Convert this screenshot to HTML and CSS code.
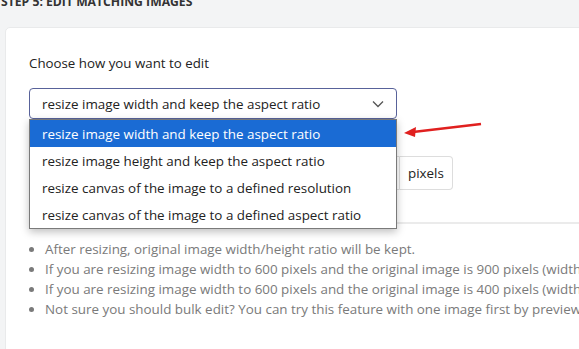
FILE: index.html
```html
<!DOCTYPE html>
<html lang="en">
<head>
    <meta charset="UTF-8">
    <title>Edit matching images</title>
    <link rel="stylesheet" href="styles.css">
</head>
<body>
    <!-- Step title -->
    <h4 class="step-title">STEP 5: EDIT MATCHING IMAGES</h4>

    <!-- Card -->
    <div class="card">
        <label class="field-label">Choose how you want to edit</label>

        <!-- Select with open dropdown -->
        <div class="select-wrap">
            <div class="select-box">
                <span>resize image width and keep the aspect ratio</span>
                <svg class="chevron" width="12" height="8" viewBox="0 0 12 8">
                    <path d="M1 1.5 L6 6.5 L11 1.5" fill="none" stroke="#555" stroke-width="1.3"/>
                </svg>
            </div>
            <ul class="select-list">
                <li class="active">resize image width and keep the aspect ratio</li>
                <li>resize image height and keep the aspect ratio</li>
                <li>resize canvas of the image to a defined resolution</li>
                <li>resize canvas of the image to a defined aspect ratio</li>
            </ul>
            <svg class="pointer" width="80" height="20" viewBox="0 0 80 20">
                <path d="M78 2 L10 10" stroke="#e0201f" stroke-width="2.4" fill="none"/>
                <path d="M1 11 L13 5 L12 15 Z" fill="#e0201f"/>
            </svg>
        </div>

        <!-- Width input -->
        <div class="input-group">
            <input type="text" class="input-field" value="600">
            <span class="addon">pixels</span>
        </div>

        <hr class="divider">

        <ul class="notes">
            <li>After resizing, original image width/height ratio will be kept.</li>
            <li>If you are resizing image width to 600 pixels and the original image is 900 pixels (width) x 600 pixels (height), the result is 600 x 400.</li>
            <li>If you are resizing image width to 600 pixels and the original image is 400 pixels (width) x 300 pixels (height), the result is 600 x 450.</li>
            <li>Not sure you should bulk edit? You can try this feature with one image first by previewing it.</li>
        </ul>
    </div>
</body>
</html>
```

FILE: styles.css
```css
/* Geral */
body {
    margin: 0;
    padding: 0;
    background-color: #f3f4f5;
    font-family: "Open Sans", Arial, sans-serif;
    font-size: 13.4px;
    color: #222;
    overflow: hidden;
    width: 579px;
    height: 349px;
}

/* Titulo do passo */
.step-title {
    margin: -7px 0 0 1px;
    font-size: 12.2px;
    line-height: 18px;
    font-weight: bold;
    color: #333;
    white-space: nowrap;
}

/* Card */
.card {
    margin: 16px 0 0 5px;
    width: 640px;
    height: 400px;
    background-color: #fff;
    border: 1px solid #e9eaeb;
    border-radius: 5px;
    padding: 25px 23px 0;
    box-sizing: border-box;
}

.field-label {
    display: block;
    font-size: 13.3px;
    line-height: 20px;
}

/* Select */
.select-wrap {
    position: relative;
    width: 368px;
    margin-top: 15px;
}

.select-box {
    height: 31px;
    border: 1px solid #58629a;
    border-radius: 4px;
    box-sizing: border-box;
    display: flex;
    align-items: center;
    justify-content: space-between;
    padding: 0 12px;
    white-space: nowrap;
}

.chevron {
    margin-top: 1px;
}

.select-list {
    position: absolute;
    top: 31px;
    left: 0;
    width: 100%;
    margin: 0;
    padding: 0;
    list-style: none;
    background-color: #fff;
    border: 1px solid #7a7a7a;
    box-sizing: border-box;
    box-shadow: 0 3px 8px rgba(0, 0, 0, 0.25);
    z-index: 2;
}

.select-list li {
    height: 27px;
    line-height: 28px;
    padding-left: 12px;
    white-space: nowrap;
}

.select-list li.active {
    background-color: #1a6bd4;
    color: #fff;
}

.pointer {
    position: absolute;
    left: 374px;
    top: 34px;
    z-index: 3;
}

/* Input com sufixo */
.input-group {
    display: flex;
    margin-top: 37px;
    height: 34px;
}

.input-field {
    width: 371px;
    box-sizing: border-box;
    border: 1px solid #ddd;
    border-radius: 4px 0 0 4px;
    padding: 0 12px;
    font-size: 13.4px;
}

.addon {
    display: flex;
    align-items: center;
    padding: 0 8px;
    border: 1px solid #ddd;
    border-left: none;
    border-radius: 0 4px 4px 0;
}

/* Linha */
.divider {
    margin: 32px 0 0;
    border: none;
    border-top: 2px solid #ebebeb;
}

/* Notas */
.notes {
    margin: 15px 0 0;
    padding-left: 16px;
    color: #7a7a7a;
    line-height: 20px;
}

.notes li {
    white-space: nowrap;
}
```
